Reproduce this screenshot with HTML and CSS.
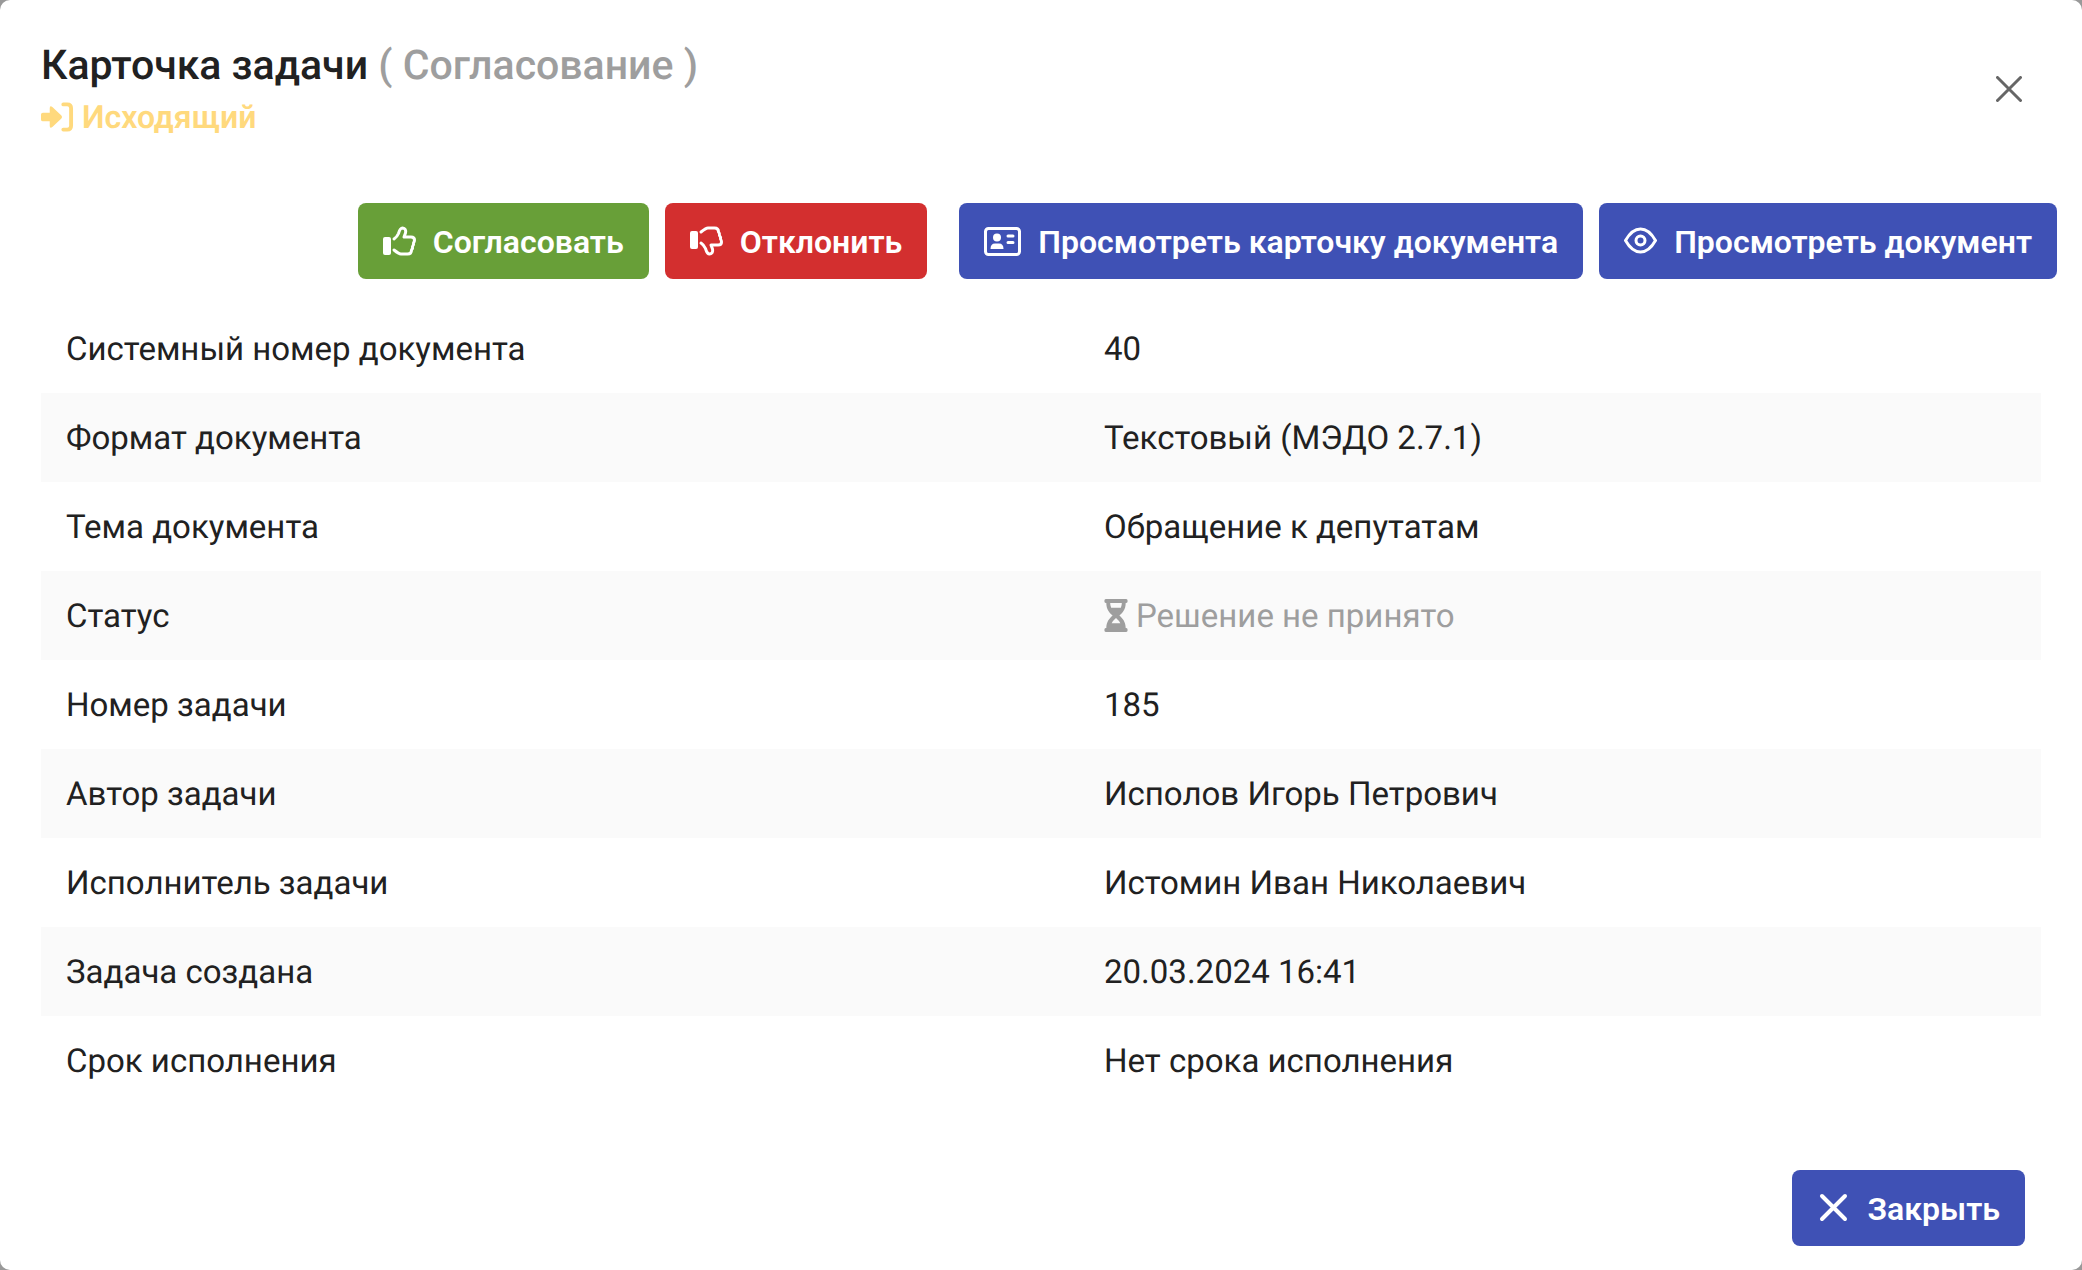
FILE: index.html
```html
<!DOCTYPE html>
<html lang="ru">
<head>
<meta charset="utf-8">
<title>Карточка задачи</title>
<link rel="stylesheet" href="styles.css">
</head>
<body>
<main class="dialog" role="dialog" aria-labelledby="dialog-title">
  <header class="dialog-header">
    <div class="heading">
      <h1 class="title" id="dialog-title">Карточка задачи <span class="muted">( Согласование )</span></h1>
      <p class="direction">
        <svg class="icon-direction" viewBox="0 0 34 30" aria-hidden="true"><path d="M2 10.500H9V6Q9 2.500 12 5L21 13.500Q22.500 15 21 16.500L12 25Q9 27.500 9 24V19.500H2Q0 19.500 0 17.500V12.500Q0 10.500 2 10.500Z" fill="currentColor"/><path d="M23 2H27Q31 2 31 6V24Q31 28 27 28H23" fill="none" stroke="currentColor" stroke-width="4" stroke-linecap="round"/></svg>
        <span>Исходящий</span>
      </p>
    </div>
    <button class="close-icon" type="button" aria-label="Закрыть окно">
      <svg viewBox="0 0 26 26" aria-hidden="true"><path d="M1.500 1.500L24.500 24.500M24.500 1.500L1.500 24.500" fill="none" stroke="currentColor" stroke-width="3" stroke-linecap="round"/></svg>
    </button>
  </header>

  <div class="toolbar">
    <div class="group">
      <button class="button approve" type="button">
        <svg class="icon" viewBox="0 0 33 30" aria-hidden="true"><rect x="0" y="11" width="8" height="18" rx="2" fill="currentColor"/><path d="M11 13Q14 11 15.500 7.500Q17 2 19.500 2Q23.500 2.500 22.500 7L21 11H28Q31.500 11 31.500 14Q31.500 15.500 30.500 17Q31 19 29.500 20.500Q30 22.500 28.500 24Q28.500 28 24.500 28H18Q16 28 11 24" fill="none" stroke="currentColor" stroke-width="3" stroke-linecap="round" stroke-linejoin="round"/></svg>
        <span>Согласовать</span>
      </button>
      <button class="button reject" type="button">
        <svg class="icon" viewBox="0 0 33 30" aria-hidden="true"><rect x="0" y="5" width="8" height="18" rx="2" fill="currentColor"/><path d="M11 6Q16 2 18 2H24.500Q28.500 2 28.500 6Q30 7.500 29.500 9.500Q31 11 30.500 13Q31.500 14.500 31.500 16Q31.500 19 28 19H21L22.500 23Q23.500 27.500 19.500 28Q17 28 15.500 22.500Q14 19 11 17" fill="none" stroke="currentColor" stroke-width="3" stroke-linecap="round" stroke-linejoin="round"/></svg>
        <span>Отклонить</span>
      </button>
    </div>
    <div class="group">
      <button class="button" type="button">
        <svg class="icon wide" viewBox="0 0 37 30" aria-hidden="true"><rect x="1.500" y="2.500" width="34" height="26" rx="3" fill="none" stroke="currentColor" stroke-width="3"/><circle cx="13" cy="11.500" r="4" fill="currentColor"/><path d="M6.500 23Q6.500 17.500 11 17.500H15Q19.500 17.500 19.500 23Z" fill="currentColor"/><path d="M24 10H29M24 16.500H29" stroke="currentColor" stroke-width="3" stroke-linecap="round"/></svg>
        <span>Просмотреть карточку документа</span>
      </button>
      <button class="button" type="button">
        <svg class="icon" viewBox="0 0 33 30" aria-hidden="true"><path d="M1.500 14.500Q8 3 16.500 3T31.500 14.500Q25 26 16.500 26T1.500 14.500Z" fill="none" stroke="currentColor" stroke-width="3" stroke-linejoin="round"/><circle cx="16.500" cy="14.500" r="4.500" fill="none" stroke="currentColor" stroke-width="3"/></svg>
        <span>Просмотреть документ</span>
      </button>
    </div>
  </div>

  <table class="details">
    <tbody>
      <tr><th scope="row">Системный номер документа</th><td>40</td></tr>
      <tr><th scope="row">Формат документа</th><td>Текстовый (МЭДО 2.7.1)</td></tr>
      <tr><th scope="row">Тема документа</th><td>Обращение к депутатам</td></tr>
      <tr><th scope="row">Статус</th><td><span class="status"><svg class="icon-status" viewBox="0 0 24 34" aria-hidden="true"><path fill="currentColor" fill-rule="evenodd" d="M1.500 0H22.500Q24 0 24 2T22.500 4H22C22 11 18.500 14 15.500 17C18.500 20 22 23 22 30H22.500Q24 30 24 32T22.500 34H1.500Q0 34 0 32T1.500 30H2C2 23 5.500 20 8.500 17C5.500 14 2 11 2 4H1.500Q0 4 0 2T1.500 0ZM6 4Q6 6.500 7 9H17Q18 6.500 18 4ZM7.500 25H16.500Q15 22 12 19.500Q9 22 7.500 25Z"/></svg><span>Решение не принято</span></span></td></tr>
      <tr><th scope="row">Номер задачи</th><td>185</td></tr>
      <tr><th scope="row">Автор задачи</th><td>Исполов Игорь Петрович</td></tr>
      <tr><th scope="row">Исполнитель задачи</th><td>Истомин Иван Николаевич</td></tr>
      <tr><th scope="row">Задача создана</th><td>20.03.2024 16:41</td></tr>
      <tr><th scope="row">Срок исполнения</th><td>Нет срока исполнения</td></tr>
    </tbody>
  </table>

  <footer class="dialog-footer">
    <button class="button" type="button">
      <svg class="icon" viewBox="0 0 33 30" aria-hidden="true"><path d="M5 3L28 26M28 3L5 26" fill="none" stroke="currentColor" stroke-width="4" stroke-linecap="round"/></svg>
      <span>Закрыть</span>
    </button>
  </footer>
</main>
</body>
</html>
```

FILE: styles.css
```css
* {
  box-sizing: border-box;
}

body {
  margin: 0;
  background: #999999;
  color: #212121;
  font-family: Roboto, "Liberation Sans", sans-serif;
  font-size: 33px;
  line-height: 40px;
  text-rendering: geometricPrecision;
}

.dialog {
  display: flex;
  flex-direction: column;
  min-height: 100vh;
  background: #ffffff;
  border-radius: 10px;
}

.dialog-header {
  display: flex;
  justify-content: space-between;
  padding: 40px 41px 0;
}

.title {
  margin: 0;
  font-size: 41px;
  font-weight: 500;
  line-height: 52px;
}

.muted,
.status {
  color: #9e9e9e;
}

.direction {
  display: flex;
  align-items: center;
  gap: 8px;
  margin: 5px 0 0;
  color: #ffd97d;
  font-size: 32px;
  font-weight: 600;
}

.icon-direction {
  width: 33px;
  height: 30px;
}

.close-icon {
  display: grid;
  place-items: center;
  width: 64px;
  height: 64px;
  margin-top: 17px;
  padding: 0;
  border: 0;
  background: none;
  color: #666666;
}

.close-icon svg {
  width: 26px;
  height: 26px;
}

.toolbar {
  display: flex;
  flex-wrap: wrap;
  justify-content: flex-end;
  gap: 16px 32px;
  padding: 66px 25px 0;
}

.group {
  display: flex;
  gap: 16px;
}

.button {
  display: flex;
  align-items: center;
  gap: 17px;
  padding: 19px 25px 17px;
  border: 0;
  border-radius: 8px;
  background: #3f51b5;
  color: #ffffff;
  font: inherit;
  font-size: 32px;
  font-weight: 600;
}

.approve {
  background: #689f38;
}

.reject {
  background: #d32f2f;
}

.icon {
  width: 33px;
  height: 30px;
  margin-bottom: 2px;
}

.wide {
  width: 37px;
}

.details {
  width: calc(100% - 82px);
  margin: 25px 41px 0;
  border-collapse: collapse;
  table-layout: fixed;
}

.details th,
.details td {
  padding: 26px 25px 23px;
  font-weight: 400;
  text-align: left;
}

.details th {
  width: 52%;
}

.details td {
  padding-left: 23px;
}

.details tr:nth-child(even) {
  background: #fafafa;
}

.status {
  display: flex;
  align-items: center;
  gap: 8px;
}

.icon-status {
  width: 24px;
  height: 33px;
  margin-bottom: 4px;
}

.dialog-footer {
  display: flex;
  justify-content: flex-end;
  margin-top: auto;
  padding: 24px 57px;
}
```
